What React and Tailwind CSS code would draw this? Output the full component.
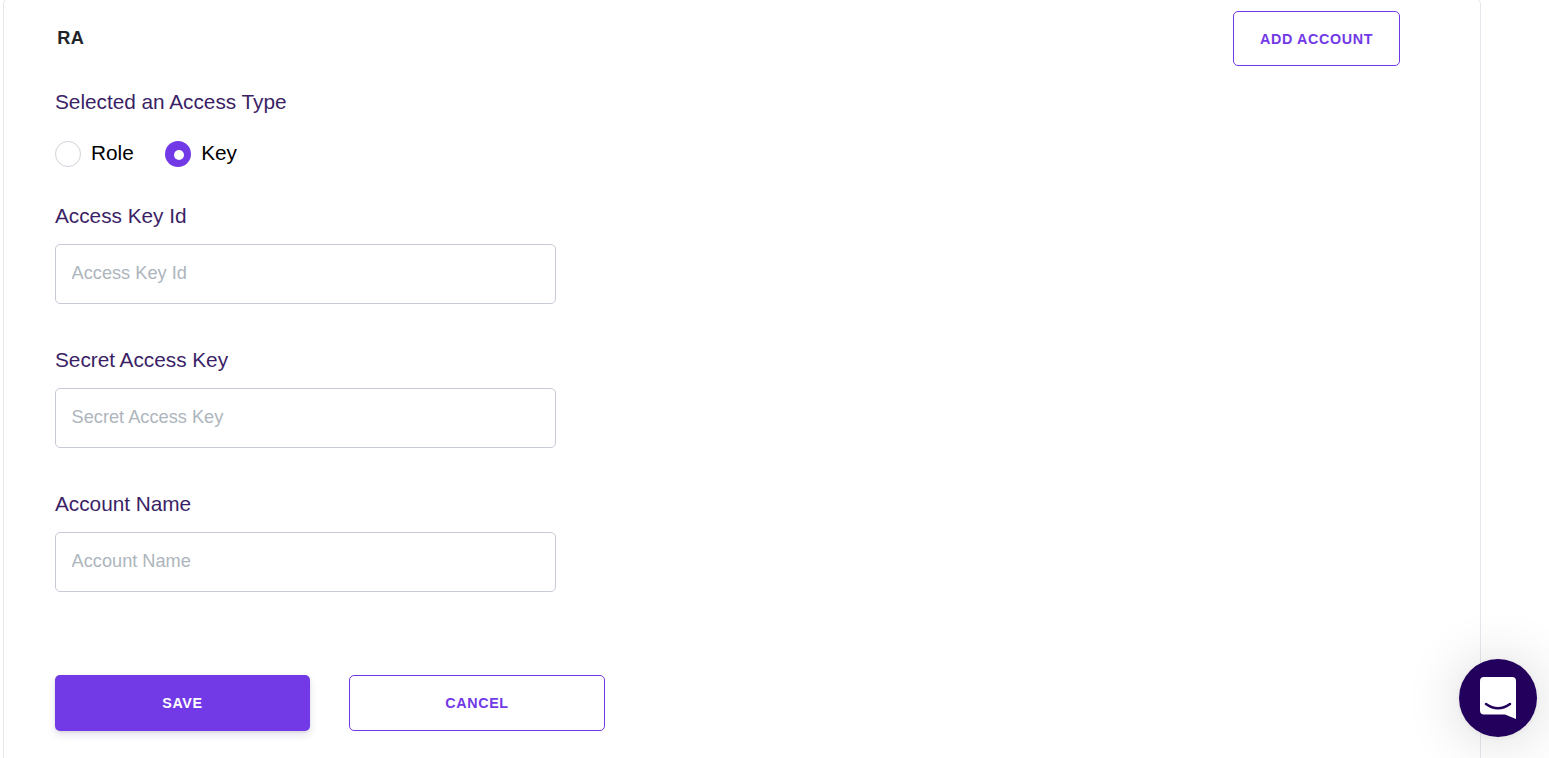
import React, { useState } from 'react';

const FIELDS = [
  { id: 'accessKeyId', label: 'Access Key Id' },
  { id: 'secretAccessKey', label: 'Secret Access Key' },
  { id: 'accountName', label: 'Account Name' },
];

const buttonBase =
  'flex items-center justify-center rounded-[5px] text-[14.3px] leading-5 font-bold tracking-[0.65px] uppercase';

function RadioOption({ label, value, checked, onChange }) {
  return (
    <label className="flex items-center gap-[10px] cursor-pointer">
      <input
        type="radio"
        name="accessType"
        value={value}
        checked={checked}
        onChange={() => onChange(value)}
        className="sr-only"
      />
      {checked ? (
        <span className="mt-[2px] flex h-[26px] w-[26px] items-center justify-center rounded-full bg-[#7239e6]">
          <span className="mt-px ml-px h-[10px] w-[10px] rounded-full bg-white" />
        </span>
      ) : (
        <span className="mt-[2px] h-[26px] w-[26px] rounded-full border border-[#ced4da] bg-white" />
      )}
      <span className="text-[20.8px] leading-[30px] text-black">{label}</span>
    </label>
  );
}

function TextField({ id, label }) {
  return (
    <div className="h-36">
      <label htmlFor={id} className="block text-[20.8px] leading-[30px] tracking-[-0.02px] text-[#3b1f66]">
        {label}
      </label>
      <input
        id={id}
        type="text"
        placeholder={label}
        className="mt-[13px] block h-[60px] w-[501px] rounded-[5px] border border-[#c6cad6] bg-white pr-4 pb-px pl-[15.6px] text-[18.2px] text-gray-800 outline-none placeholder:text-[#adb5bd]"
      />
    </div>
  );
}

function ChatLauncher() {
  return (
    <button
      aria-label="Open chat"
      className="fixed right-3 bottom-[21px] flex h-[78px] w-[78px] items-center justify-center rounded-full bg-[#23005b] shadow-[0_1.3px_7.8px_rgba(0,0,0,0.06),0_2.6px_56px_rgba(0,0,0,0.16)]"
    >
      <svg className="h-[42px] w-9" viewBox="0 0 36 42" fill="none">
        <path
          d="M4 0H32Q36 0 36 4V42L25 37.5H4Q0 37.5 0 33.5V4Q0 0 4 0Z"
          fill="white"
        />
        <path d="M6 27Q18 35.500 30 27" stroke="#23005b" strokeWidth="2.5" strokeLinecap="round" />
      </svg>
    </button>
  );
}

export default function App() {
  const [accessType, setAccessType] = useState('key');

  return (
    <div className="h-screen overflow-hidden bg-white pl-[3px] font-['Liberation_Sans',sans-serif]">
      <div className="-mt-[2px] h-[800px] w-[1478px] rounded-[6px] border border-[#e4e7ec] pt-3 pr-20 pl-[51px]">
        <div className="flex items-start justify-between">
          <h2 className="mt-[14px] ml-[2.3px] text-[18.2px] leading-[26px] font-bold tracking-[0.4px] text-[#212529]">
            RA
          </h2>
          <button className={`${buttonBase} h-[55px] w-[167px] border border-[#7239e6] text-[#7239e6]`}>
            Add Account
          </button>
        </div>

        <p className="mt-[21px] text-[20.8px] leading-[30px] tracking-[-0.02px] text-[#3b1f66]">
          Selected an Access Type
        </p>
        <div className="mt-[21px] mb-[33px] flex gap-[31.4px]">
          <RadioOption label="Role" value="role" checked={accessType === 'role'} onChange={setAccessType} />
          <RadioOption label="Key" value="key" checked={accessType === 'key'} onChange={setAccessType} />
        </div>

        {FIELDS.map((field) => (
          <TextField key={field.id} {...field} />
        ))}

        <div className="mt-[42px] flex gap-[39px]">
          <button
            className={`${buttonBase} h-14 w-[255px] bg-[#7239e6] text-white shadow-[0_4px_8px_rgba(35,0,91,0.12),0_1px_3px_rgba(0,0,0,0.08)]`}
          >
            Save
          </button>
          <button className={`${buttonBase} h-14 w-64 border border-[#7239e6] text-[#7239e6]`}>Cancel</button>
        </div>
      </div>

      <ChatLauncher />
    </div>
  );
}
